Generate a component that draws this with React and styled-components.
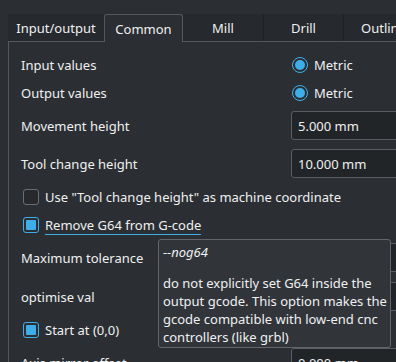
import React from "react";
import styled, { createGlobalStyle } from "styled-components";

const C = {
  win: "#2b2f33",
  tabIdle: "#26292d",
  sep: "#1e2124",
  frame: "#54585c",
  field: "#222528",
  fieldBorder: "#5a5e62",
  text: "#eff0f1",
  blue: "#3daee9",
  tip: "#31353a",
  tipBorder: "#62666a",
};

const Global = createGlobalStyle`
  html, body { margin: 0; padding: 0; background: ${C.win}; overflow: hidden; }
  body { font-family: "Noto Sans", "DejaVu Sans", sans-serif; font-size: 13px; color: ${C.text}; }
  * { box-sizing: border-box; }
`;

const Page = styled.div`
  position: relative;
  width: 396px;
  height: 362px;
  overflow: hidden;
  padding: 14px 0 0 8px;
`;

const TabBar = styled.div`
  display: flex;
  height: 27px;
  position: relative;
  z-index: 2;
`;

const Tab = styled.div`
  flex: 0 0 ${(p) => p.$w}px;
  height: ${(p) => (p.$active ? 28 : 27)}px;
  display: flex;
  align-items: center;
  white-space: nowrap;
  background: ${(p) => (p.$active ? C.win : C.tabIdle)};
  border: ${(p) => (p.$active ? `1px solid ${C.frame}` : "none")};
  border-bottom: none;
  border-radius: ${(p) => (p.$active ? "3px 3px 0 0" : "0")};
  border-right: ${(p) => (p.$active ? `1px solid ${C.frame}` : p.$sep ? `1px solid ${C.sep}` : "none")};
  padding-left: ${(p) => p.$pl || 0}px;
  justify-content: ${(p) => (p.$pl ? "flex-start" : "center")};
`;

const Panel = styled.div`
  width: 460px;
  height: 400px;
  border-top: 1px solid ${C.frame};
  border-left: 1px solid ${C.frame};
  padding: 0 0 0 12px;
  display: flex;
  flex-direction: column;
`;

const Row = styled.div`
  display: grid;
  grid-template-columns: 270px 1fr;
  align-items: center;
  height: ${(p) => p.$h}px;
  margin-top: ${(p) => p.$mt}px;
  flex: 0 0 auto;
`;

const Label = styled.span`
  line-height: 18px;
  white-space: nowrap;
`;

const RadioWrap = styled.label`
  display: flex;
  align-items: center;
  gap: 6px;
  padding-left: 1px;
`;

const RadioDot = styled.span`
  width: 16px;
  height: 16px;
  border-radius: 50%;
  border: 1px solid ${C.blue};
  display: flex;
  align-items: center;
  justify-content: center;
  &::after {
    content: "";
    width: 10px;
    height: 10px;
    border-radius: 50%;
    background: ${C.blue};
  }
`;

const Field = styled.div`
  height: 29px;
  border: 1px solid ${C.fieldBorder};
  border-radius: 3px;
  background: ${C.field};
  display: flex;
  align-items: center;
  padding-left: 6px;
  white-space: nowrap;
`;

const CheckRow = styled.div`
  grid-column: 1 / -1;
  display: flex;
  align-items: center;
  gap: 6px;
  padding-left: 2px;
`;

const Box = styled.span`
  width: 16px;
  height: 16px;
  border-radius: 3px;
  border: 1px solid ${(p) => (p.$on ? C.blue : "#6a6d71")};
  background: ${(p) => (p.$on ? "transparent" : "#27292d")};
  padding: 2px;
  display: flex;
  &::after {
    content: "";
    flex: 1;
    border-radius: 1px;
    background: ${(p) => (p.$on ? C.blue : "transparent")};
  }
`;

const Focused = styled.span`
  line-height: 18px;
  border-bottom: 1px solid ${C.blue};
  white-space: nowrap;
`;

const Tooltip = styled.div`
  position: absolute;
  left: 158px;
  top: 239px;
  width: 233px;
  height: 109px;
  background: ${C.tip};
  border: 1px solid ${C.tipBorder};
  border-radius: 3px;
  padding: 3px 4px 2px 4px;
  line-height: 18px;
  z-index: 5;
  white-space: nowrap;
`;

const TipTitle = styled.div`
  font-style: italic;
  margin-bottom: 13px;
`;

const TipLine = styled.div``;

function Radio({ children }) {
  return (
    <RadioWrap>
      <RadioDot />
      <Label>{children}</Label>
    </RadioWrap>
  );
}

const tipLines = [
  "do not explicitly set G64 inside the",
  "output gcode. This option makes the",
  "gcode compatible with low-end cnc",
  "controllers (like grbl)",
];

export default function App() {
  return (
    <Page>
      <Global />
      <TabBar>
        <Tab $w={96}>Input/output</Tab>
        <Tab $w={79} $active>Common</Tab>
        <Tab $w={81} $sep>Mill</Tab>
        <Tab $w={80} $sep>Drill</Tab>
        <Tab $w={80} $pl={17}>Outline</Tab>
      </TabBar>
      <Panel>
        <Row $h={22} $mt={12}>
          <Label>Input values</Label>
          <Radio>Metric</Radio>
        </Row>
        <Row $h={22} $mt={6}>
          <Label>Output values</Label>
          <Radio>Metric</Radio>
        </Row>
        <Row $h={29} $mt={7}>
          <Label>Movement height</Label>
          <Field>5.000 mm</Field>
        </Row>
        <Row $h={29} $mt={9}>
          <Label>Tool change height</Label>
          <Field>10.000 mm</Field>
        </Row>
        <Row $h={22} $mt={8}>
          <CheckRow>
            <Box />
            <Label>Use "Tool change height" as machine coordinate</Label>
          </CheckRow>
        </Row>
        <Row $h={22} $mt={6}>
          <CheckRow>
            <Box $on />
            <Focused>Remove G64 from G-code</Focused>
          </CheckRow>
        </Row>
        <Row $h={29} $mt={7}>
          <Label>Maximum tolerance</Label>
          <Field>0.010 mm</Field>
        </Row>
        <Row $h={29} $mt={10}>
          <Label>optimise val</Label>
          <Field>0.000 mm</Field>
        </Row>
        <Row $h={22} $mt={8}>
          <CheckRow>
            <Box $on />
            <Label>Start at (0,0)</Label>
          </CheckRow>
        </Row>
        <Row $h={29} $mt={7}>
          <Label>Axis mirror offset</Label>
          <Field>0.000 mm</Field>
        </Row>
      </Panel>
      <Tooltip>
        <TipTitle>--nog64</TipTitle>
        {tipLines.map((l) => (
          <TipLine key={l}>{l}</TipLine>
        ))}
      </Tooltip>
    </Page>
  );
}
